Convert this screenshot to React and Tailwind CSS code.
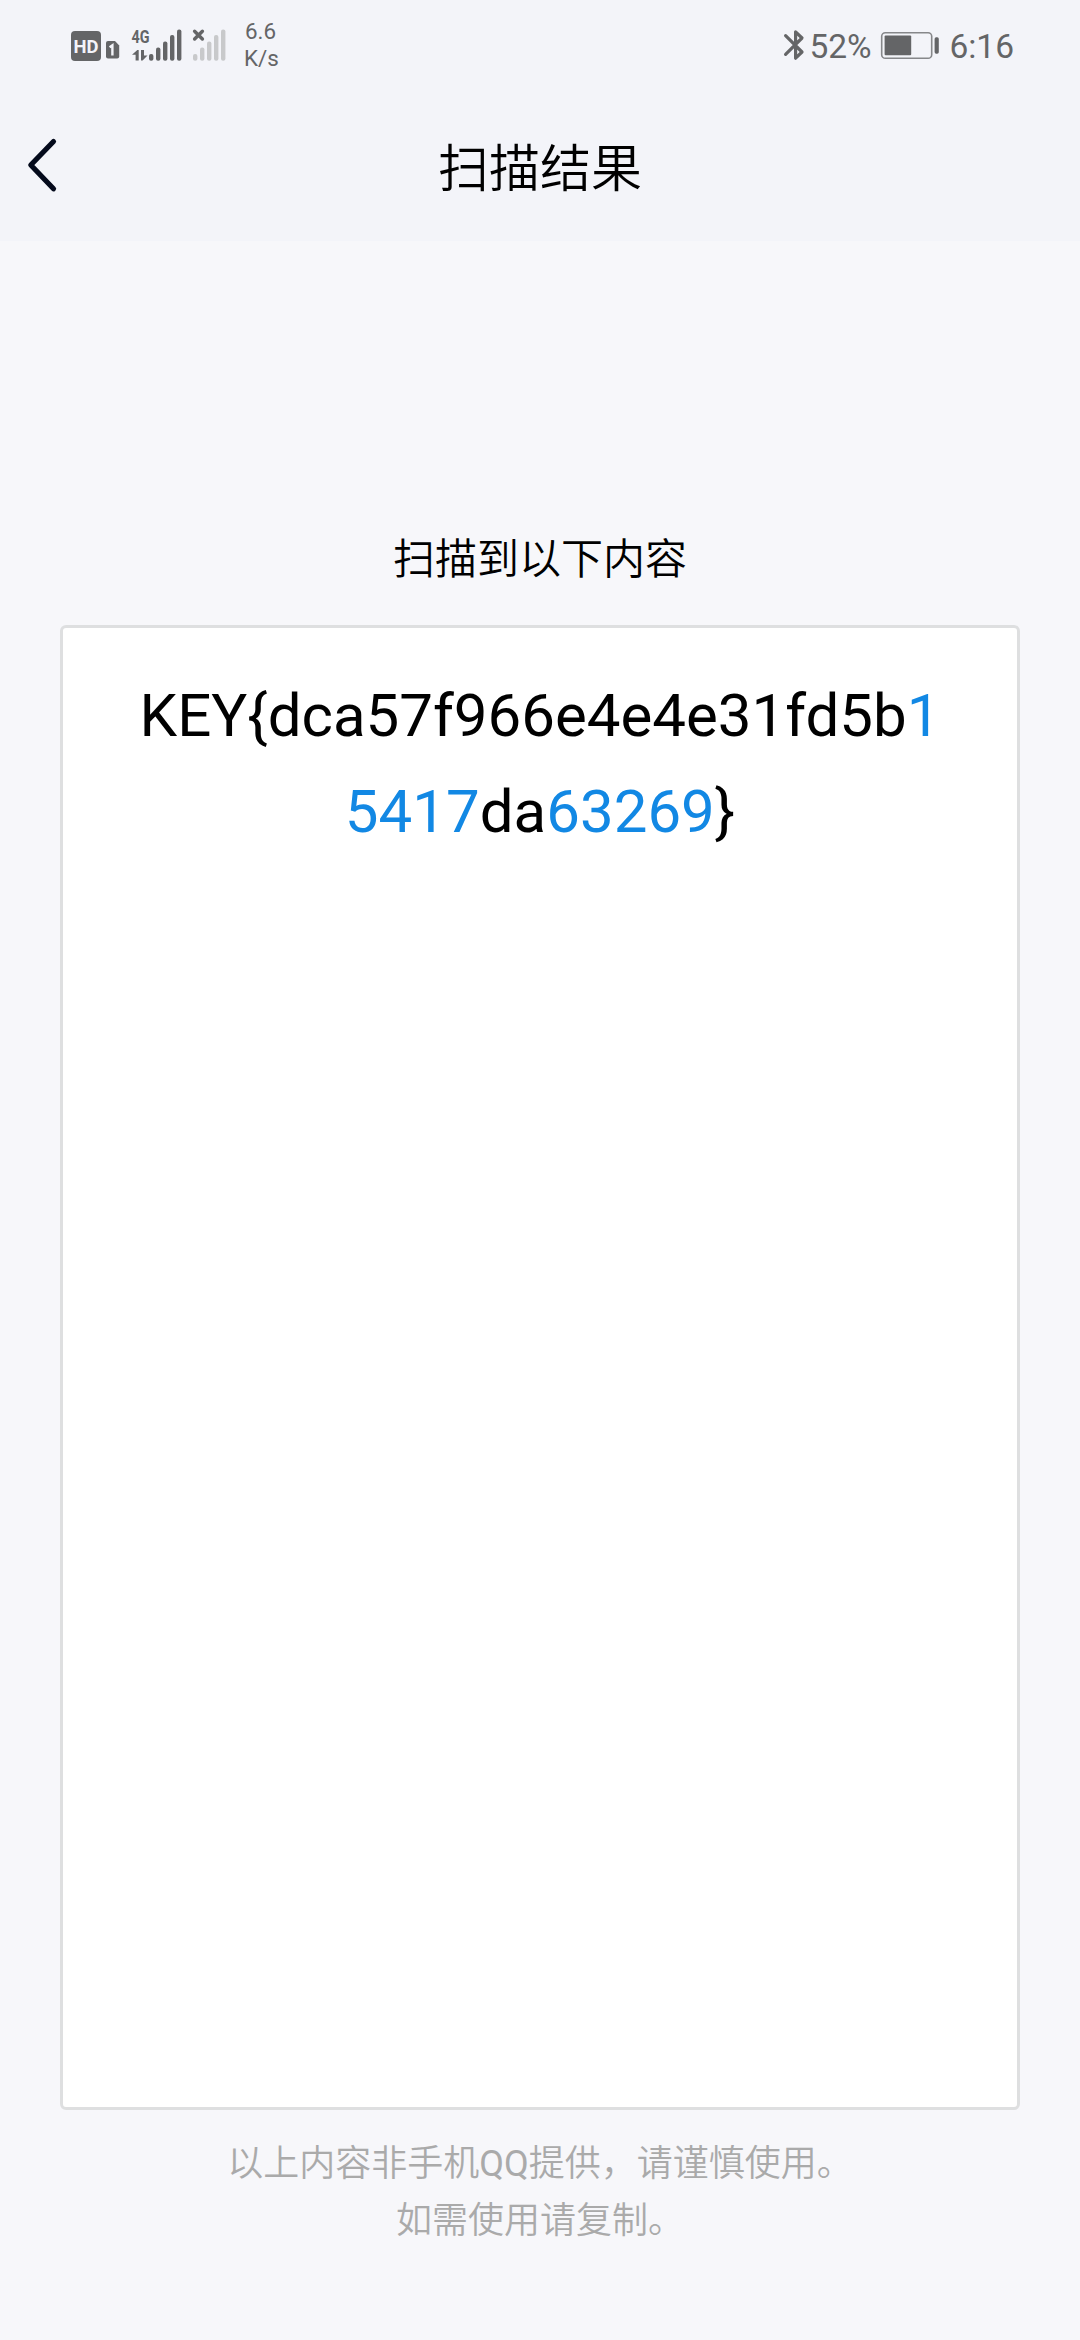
const bars = [
  { x: 0, top: 54 },
  { x: 7, top: 47.5 },
  { x: 14, top: 41.5 },
  { x: 21, top: 35 },
  { x: 28, top: 29.5 },
];

function SignalBars({ x, fill }) {
  return (
    <g fill={fill}>
      {bars.map((b) => (
        <rect key={b.x} x={x + b.x} y={b.top} width="4.4" height={60.7 - b.top} rx="2" />
      ))}
    </g>
  );
}

function CellularIcons() {
  return (
    <svg width="158" height="90" viewBox="70 0 158 90" className="block shrink-0" fontFamily="Roboto, sans-serif">
      <rect x="71" y="31" width="30" height="30" rx="4" fill="#646567" />
      <text x="73.5" y="52.8" fontSize="19" fontWeight="700" fill="#f3f4f9" textLength="25" lengthAdjust="spacingAndGlyphs">HD</text>
      <path d="M108 41h7l4.2 4.4v11.2a2 2 0 0 1-2 2h-9.2a2 2 0 0 1-2-2V43a2 2 0 0 1 2-2z" fill="#646567" />
      <path d="M109.6 47.2l2.8-1.9v10.3" fill="none" stroke="#f3f4f9" strokeWidth="2.4" />
      <text x="131.6" y="43.3" fontSize="19" fontWeight="700" fill="#646567" textLength="18" lengthAdjust="spacingAndGlyphs">4G</text>
      <path d="M132 54.8l5.3-4.8h1.4v10.4h-3.1v-5.6zM141 50h3v5.5h3.5L142.6 60.4H141z" fill="#646567" />
      <SignalBars x={149} fill="#646567" />
      <path d="M194.6 31.2l7.8 7.8M202.4 31.2l-7.8 7.8" stroke="#646567" strokeWidth="3.4" strokeLinecap="round" />
      <SignalBars x={193} fill="#c8c9cb" />
    </svg>
  );
}

function BluetoothIcon() {
  return (
    <svg width="24" height="90" viewBox="782 0 24 90" className="block shrink-0">
      <path d="M784.6 35.6L801 52L794.6 58.2V31.8L801 38L784.6 54.4" fill="none" stroke="#646567" strokeWidth="3.2" strokeLinecap="round" strokeLinejoin="round" />
    </svg>
  );
}

function BatteryIcon() {
  return (
    <svg width="60" height="90" viewBox="880 0 60 90" className="block shrink-0">
      <rect x="881.7" y="32.7" width="50" height="25.6" rx="3.6" fill="none" stroke="#86878a" strokeWidth="1.6" />
      <rect x="884.6" y="35.6" width="26.6" height="19.6" rx="1" fill="#646567" />
      <rect x="934.6" y="37.3" width="4.2" height="16.4" rx="1.6" fill="#646567" />
    </svg>
  );
}

export default function App() {
  return (
    <div className="flex h-[2340px] w-[1080px] flex-col overflow-hidden bg-[#f7f7fa] font-['Roboto','Noto_Sans_CJK_SC',sans-serif] text-black">
      <header className="h-[241px] shrink-0 bg-[#f3f4f9]">
        <div className="flex h-[90px] items-center pl-[70px] text-[#646567]">
          <CellularIcons />
          <div className="ml-4 w-[80px] text-[22.4px] leading-[27px]">
            <p className="pl-px">6.6</p>
            <p>K/s</p>
          </div>
          <div className="ml-auto flex items-center pr-[66px] text-[33.5px] leading-[40px]">
            <BluetoothIcon />
            <span className="ml-[2px] mt-1 w-[69px] whitespace-nowrap">52%</span>
            <div className="ml-0.5"><BatteryIcon /></div>
            <span className="ml-[9px] mt-1">6:16</span>
          </div>
        </div>
        <div className="grid h-[151px] grid-cols-[100px_1fr_100px] items-center">
          <button aria-label="返回" className="mb-[1px] pl-[25px]">
            <svg width="36" height="60" viewBox="25 135 36 60" fill="none" className="block">
              <path d="M53.5 141.5L30.8 165L53.5 188.8" stroke="#040a1c" strokeWidth="5.2" strokeLinecap="round" strokeLinejoin="round" />
            </svg>
          </button>
          <h1 className="pt-2 text-center text-[51px] leading-[74px] font-[350]">扫描结果</h1>
        </div>
      </header>
      <main className="flex flex-1 flex-col px-[60px] pt-[288px] text-center">
        <h2 className="text-[42px] leading-[62px] font-[350]">扫描到以下内容</h2>
        <section className="mt-[34px] h-[1485px] shrink-0 rounded-md border-3 border-[#dedfe0] bg-white pt-10 text-[60px] leading-[96px]">
          <p>
            KEY&#123;dca57f966e4e4e31fd5b<span className="text-[#1288e4]">1</span>
          </p>
          <p>
            <span className="text-[#1288e4]">5417</span>da<span className="text-[#1288e4]">63269</span>&#125;
          </p>
        </section>
        <footer className="mt-[26px] text-[36px] leading-[57px] font-[350] text-[#aaaaaa]">
          <p>以上内容非手机<span className="font-normal">QQ</span>提供，请谨慎使用。</p>
          <p>如需使用请复制。</p>
        </footer>
      </main>
    </div>
  );
}
